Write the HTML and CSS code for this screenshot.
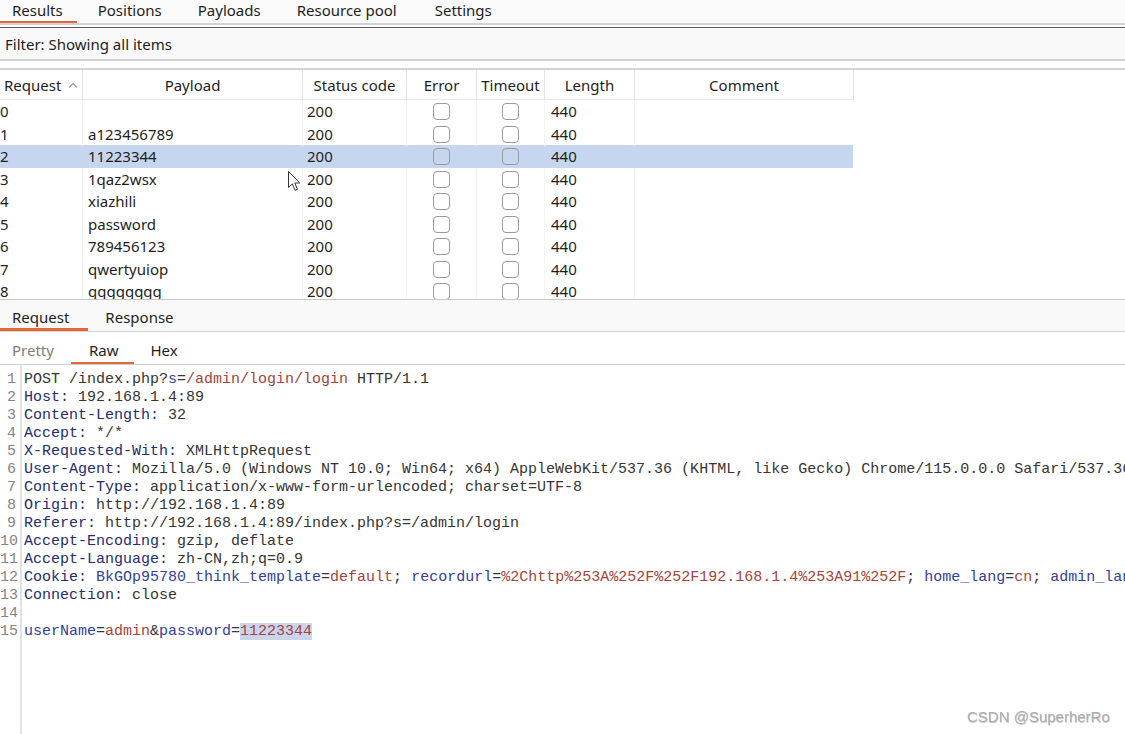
FILE: index.html
```html
<!DOCTYPE html>
<html>
<head>
<meta charset="utf-8">
<title>Intruder Results</title>
<link rel="stylesheet" href="styles.css">
</head>
<body>
<div class="app">
  <div class="tabbar top">
    <div class="tab active">Results</div>
    <div class="tab">Positions</div>
    <div class="tab">Payloads</div>
    <div class="tab">Resource pool</div>
    <div class="tab">Settings</div>
  </div>
  <div class="filter">Filter: Showing all items</div>
  <div class="results">
    <div class="thead">
      <div class="th left">Request<svg class="caret" width="10" height="6" viewBox="0 0 10 6"><path d="M1 5.5 L5 1.5 L9 5.5" fill="none" stroke="#9a9a9a" stroke-width="1.1"/></svg></div>
      <div class="th">Payload</div>
      <div class="th">Status code</div>
      <div class="th">Error</div>
      <div class="th">Timeout</div>
      <div class="th">Length</div>
      <div class="th">Comment</div>
    </div>
    <div class="tbody">
      <div class="row"><div class="td num">0</div><div class="td pl"></div><div class="td st">200</div><div class="td cb"><span class="box"></span></div><div class="td cb"><span class="box"></span></div><div class="td len">440</div><div class="td"></div></div>
      <div class="row"><div class="td num">1</div><div class="td pl">a123456789</div><div class="td st">200</div><div class="td cb"><span class="box"></span></div><div class="td cb"><span class="box"></span></div><div class="td len">440</div><div class="td"></div></div>
      <div class="row selected"><div class="td num">2</div><div class="td pl">11223344</div><div class="td st">200</div><div class="td cb"><span class="box"></span></div><div class="td cb"><span class="box"></span></div><div class="td len">440</div><div class="td"></div></div>
      <div class="row"><div class="td num">3</div><div class="td pl">1qaz2wsx</div><div class="td st">200</div><div class="td cb"><span class="box"></span></div><div class="td cb"><span class="box"></span></div><div class="td len">440</div><div class="td"></div></div>
      <div class="row"><div class="td num">4</div><div class="td pl">xiazhili</div><div class="td st">200</div><div class="td cb"><span class="box"></span></div><div class="td cb"><span class="box"></span></div><div class="td len">440</div><div class="td"></div></div>
      <div class="row"><div class="td num">5</div><div class="td pl">password</div><div class="td st">200</div><div class="td cb"><span class="box"></span></div><div class="td cb"><span class="box"></span></div><div class="td len">440</div><div class="td"></div></div>
      <div class="row"><div class="td num">6</div><div class="td pl">789456123</div><div class="td st">200</div><div class="td cb"><span class="box"></span></div><div class="td cb"><span class="box"></span></div><div class="td len">440</div><div class="td"></div></div>
      <div class="row"><div class="td num">7</div><div class="td pl">qwertyuiop</div><div class="td st">200</div><div class="td cb"><span class="box"></span></div><div class="td cb"><span class="box"></span></div><div class="td len">440</div><div class="td"></div></div>
      <div class="row"><div class="td num">8</div><div class="td pl">gggggggg</div><div class="td st">200</div><div class="td cb"><span class="box"></span></div><div class="td cb"><span class="box"></span></div><div class="td len">440</div><div class="td"></div></div>
    </div>
  </div>
  <div class="tabbar reqres">
    <div class="tab active">Request</div>
    <div class="tab">Response</div>
  </div>
  <div class="tabbar sub">
    <div class="tab dim">Pretty</div>
    <div class="tab active">Raw</div>
    <div class="tab">Hex</div>
  </div>
  <div class="editor">
    <div class="gutter">
      <div>1</div><div>2</div><div>3</div><div>4</div><div>5</div><div>6</div><div>7</div><div>8</div><div>9</div><div>10</div><div>11</div><div>12</div><div>13</div><div>14</div><div>15</div>
    </div>
    <div class="code">
      <div class="ln">POST /index.php?<span class="pn">s</span>=<span class="pv">/admin/login/login</span> HTTP/1.1</div>
      <div class="ln"><span class="hn">Host:</span> 192.168.1.4:89</div>
      <div class="ln"><span class="hn">Content-Length:</span> 32</div>
      <div class="ln"><span class="hn">Accept:</span> */*</div>
      <div class="ln"><span class="hn">X-Requested-With:</span> XMLHttpRequest</div>
      <div class="ln"><span class="hn">User-Agent:</span> Mozilla/5.0 (Windows NT 10.0; Win64; x64) AppleWebKit/537.36 (KHTML, like Gecko) Chrome/115.0.0.0 Safari/537.36</div>
      <div class="ln"><span class="hn">Content-Type:</span> application/x-www-form-urlencoded; charset=UTF-8</div>
      <div class="ln"><span class="hn">Origin:</span> http://192.168.1.4:89</div>
      <div class="ln"><span class="hn">Referer:</span> http://192.168.1.4:89/index.php?s=/admin/login</div>
      <div class="ln"><span class="hn">Accept-Encoding:</span> gzip, deflate</div>
      <div class="ln"><span class="hn">Accept-Language:</span> zh-CN,zh;q=0.9</div>
      <div class="ln"><span class="hn">Cookie:</span> <span class="pn">BkGOp95780_think_template</span>=<span class="pv">default</span>; <span class="pn">recordurl</span>=<span class="pv">%2Chttp%253A%252F%252F192.168.1.4%253A91%252F</span>; <span class="pn">home_lang</span>=<span class="pv">cn</span>; <span class="pn">admin_lang</span>=<span class="pv">cn</span></div>
      <div class="ln"><span class="hn">Connection:</span> close</div>
      <div class="ln"> </div>
      <div class="ln"><span class="pn">userName</span>=<span class="pv">admin</span>&amp;<span class="pn">password</span>=<span class="pv sel">11223344</span></div>
    </div>
  </div>
  <div class="watermark">CSDN @SuperherRo</div>
  <svg class="cursor" width="13" height="21" viewBox="0 0 13 21"><path d="M0.5 0.5 L0.5 16.5 L4.3 12.9 L7 19.3 L9.4 18.3 L6.8 12 L11.8 12 Z" fill="#fff" stroke="#333" stroke-width="1" stroke-linejoin="round"/></svg>
</div>
</body>
</html>
```

FILE: styles.css
```css
* { box-sizing: border-box; }
html, body { margin: 0; padding: 0; }
body {
  width: 1125px;
  height: 734px;
  overflow: hidden;
  background: #fff;
  font-family: "Noto Sans", "Open Sans", sans-serif;
  font-size: 15px;
  color: #1e1e1e;
}
.app {
  position: relative;
  width: 1125px;
  height: 734px;
  display: flex;
  flex-direction: column;
}
.tabbar {
  display: flex;
  flex: none;
}
.tab {
  padding: 0 18px;
  white-space: nowrap;
}
.tab:first-child { padding-left: 12px; }
.tabbar.top {
  height: 25px;
  background: #fafafa;
  border-bottom: 2px solid #d2d2d2;
  margin-bottom: 2px;
}
.tabbar.top .tab { line-height: 20px; height: 23px; }
.tabbar.top .tab.active { box-shadow: inset 0 -2px 0 #e2683a; padding-right: 14px; }
.tabbar.top .tab:nth-child(2) { padding-left: 21px; }
.tabbar.top .tab:nth-child(5) { padding-left: 20px; }
.filter {
  flex: none;
  height: 34px;
  border-top: 1px solid #5a5a5a;
  border-bottom: 2px solid #d2d2d2;
  background: #f9f9f9;
  padding-left: 5px;
  line-height: 32px;
  margin-bottom: 7px;
}
.results {
  flex: none;
  border-top: 2px solid #d2d2d2;
}
.thead, .row {
  display: grid;
  grid-template-columns: 83px 220px 104px 70px 68px 90px 218px;
  width: 853px;
}
.thead {
  height: 30px;
  border-bottom: 1px solid #e8e8e8;
  border-right: 1px solid #e4e4e4;
  width: 854px;
}
.th {
  text-align: center;
  line-height: 30px;
  border-right: 1px solid #e4e4e4;
  white-space: nowrap;
}
.th:last-child { border-right: none; }
.th.left {
  text-align: left;
  padding-left: 4px;
  display: flex;
  align-items: center;
  gap: 7px;
}
.tbody {
  height: 199px;
  overflow: hidden;
}
.row {
  height: 22.5px;
  line-height: 23px;
}
.row.selected { background: #c6d6ee; }
.td {
  white-space: nowrap;
  border-right: 1px solid #f4f4f4;
}
.row.selected .td { border-right-color: transparent; }
.td:last-child { border-right: none; }
.td.num { padding-left: 0; }
.td.pl { padding-left: 5px; }
.td.st { padding-left: 4px; }
.td.len { padding-left: 6px; }
.td.cb {
  display: flex;
  align-items: center;
  justify-content: center;
}
.box {
  width: 17px;
  height: 17px;
  border: 1px solid #9a9a9a;
  border-radius: 4px;
  display: block;
}
.tabbar.reqres {
  height: 33px;
  background: #f9f9f9;
  border-top: 1px solid #c8c8c8;
  border-bottom: 1px solid #d2d2d2;
}
.tabbar.reqres .tab { line-height: 34px; height: 31px; }
.tabbar.reqres .tab.active { box-shadow: inset 0 -3px 0 #e2683a; padding-right: 19px; }
.tabbar.reqres .tab:nth-child(2) { padding-left: 17px; }
.tabbar.sub {
  height: 33px;
  border-bottom: 1px solid #cfcfcf;
}
.tabbar.sub .tab { line-height: 37px; height: 32px; color: #1e1e1e; }
.tabbar.sub .tab.dim { color: #7d7d7d; padding-right: 17px; }
.tabbar.sub .tab.active { box-shadow: inset 0 -2px 0 #e2683a; padding-right: 16px; }
.tabbar.sub .tab:nth-child(3) { padding-left: 16px; }
.editor {
  flex: 1;
  display: flex;
  min-height: 0;
  font-family: "Liberation Mono", "Courier New", monospace;
  font-size: 15px;
  line-height: 18px;
}
.gutter {
  flex: none;
  width: 22px;
  padding: 6px 4px 0 0;
  text-align: right;
  color: #858585;
  border-right: 2px solid #e2e2e2;
}
.code {
  flex: 1;
  padding: 6px 0 0 2px;
  overflow: hidden;
  color: #353535;
}
.ln { white-space: pre; height: 18px; }
.hn { color: #252c72; }
.pn { color: #33409e; }
.pv { color: #a6433a; }
.sel { background: #c9d5ea; }
.watermark {
  position: absolute;
  left: 967px;
  top: 707px;
  font-family: "Liberation Sans", Arial, sans-serif;
  font-size: 15px;
  line-height: 20px;
  color: #acacac;
  text-shadow: 0.5px 0.5px 0 rgba(0,0,0,0.22);
}
.cursor {
  position: absolute;
  left: 288px;
  top: 171px;
}
```
